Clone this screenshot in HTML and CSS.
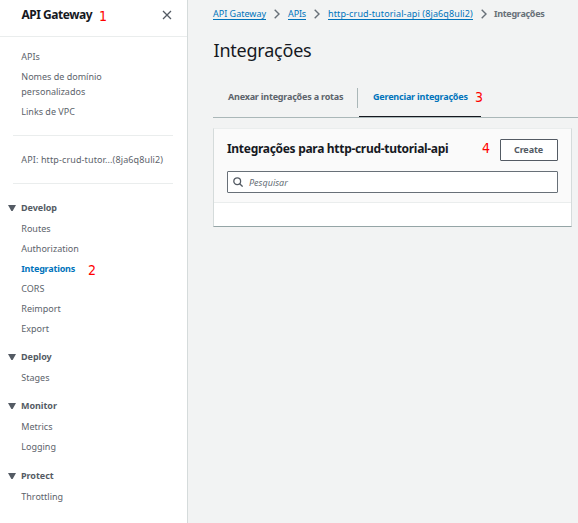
FILE: index.html
```html
<!DOCTYPE html>
<html lang="pt-BR">
<head>
<meta charset="utf-8">
<title>API Gateway</title>
<link rel="stylesheet" href="styles.css">
</head>
<body>
<div class="app">
  <aside class="sidebar">
    <header class="side-head">
      <span class="brand">API Gateway</span>
      <span class="mark mark-1">1</span>
      <svg class="close" width="10" height="10" viewBox="0 0 10 10"><path d="M1 1L9 9M9 1L1 9"/></svg>
    </header>
    <ul class="links top-links">
      <li>APIs</li>
      <li>Nomes de domínio<br>personalizados</li>
      <li>Links de VPC</li>
    </ul>
    <div class="current-api">API: http-crud-tutor...(8ja6q8uli2)</div>
    <nav>
      <section class="group">
        <h2><svg class="caret" width="8" height="6" viewBox="0 0 8 6"><path d="M0 0H8L4.6 6H3.4Z"/></svg><span>Develop</span></h2>
        <ul class="links">
          <li>Routes</li>
          <li>Authorization</li>
          <li class="active"><span class="t-int">Integrations</span><span class="mark mark-2">2</span></li>
          <li>CORS</li>
          <li>Reimport</li>
          <li>Export</li>
        </ul>
      </section>
      <section class="group">
        <h2><svg class="caret" width="8" height="6" viewBox="0 0 8 6"><path d="M0 0H8L4.6 6H3.4Z"/></svg><span>Deploy</span></h2>
        <ul class="links"><li>Stages</li></ul>
      </section>
      <section class="group">
        <h2><svg class="caret" width="8" height="6" viewBox="0 0 8 6"><path d="M0 0H8L4.6 6H3.4Z"/></svg><span>Monitor</span></h2>
        <ul class="links"><li>Metrics</li><li>Logging</li></ul>
      </section>
      <section class="group">
        <h2><svg class="caret" width="8" height="6" viewBox="0 0 8 6"><path d="M0 0H8L4.6 6H3.4Z"/></svg><span>Protect</span></h2>
        <ul class="links"><li>Throttling</li></ul>
      </section>
    </nav>
  </aside>
  <main>
    <div class="crumbs">
      <a>API Gateway</a>
      <svg class="chev" width="6" height="10" viewBox="0 0 6 10"><path d="M.7 .7L5 5L.7 9.3"/></svg>
      <a class="c2">APIs</a>
      <svg class="chev" width="6" height="10" viewBox="0 0 6 10"><path d="M.7 .7L5 5L.7 9.3"/></svg>
      <a class="c3">http-crud-tutorial-api (8ja6q8uli2)</a>
      <svg class="chev chev-last" width="6" height="10" viewBox="0 0 6 10"><path d="M.7 .7L5 5L.7 9.3"/></svg>
      <b>Integrações</b>
    </div>
    <h1>Integrações</h1>
    <div class="tabs">
      <div class="tab first">Anexar integrações a rotas</div>
      <div class="tab selected"><span class="t-manage">Gerenciar integrações</span><span class="mark mark-3">3</span></div>
    </div>
    <div class="card">
      <div class="card-head">
        <div class="title-row">
          <h3>Integrações para http-crud-tutorial-api</h3>
          <span class="mark mark-4">4</span>
          <button type="button">Create</button>
        </div>
        <div class="search">
          <svg width="10" height="10" viewBox="0 0 10 10"><circle cx="4.2" cy="4.2" r="3.4"/><path d="M6.7 6.7L9.6 9.6"/></svg>
          <span>Pesquisar</span>
        </div>
      </div>
      <div class="card-body"></div>
    </div>
  </main>
</div>
</body>
</html>
```
FILE: styles.css
```css
* { box-sizing: border-box; margin: 0; padding: 0; }
body {
  width: 578px; height: 523px; overflow: hidden;
  background: #f2f3f3; color: #5c636b;
  font: 9px/15px "Noto Sans", "Open Sans", sans-serif;
}
ul { list-style: none; }
svg { display: block; flex: none; }
.app { display: flex; height: 523px; white-space: nowrap; }
.sidebar { width: 188px; flex: none; background: #fff; border-right: 1px solid #d5dbdb; }
.side-head { display: flex; height: 37px; border-bottom: 1px solid #eaeded; padding: 6px 0 0 21.5px; line-height: 18px; }
.brand { width: 77.5px; font-size: 12px; font-weight: 700; letter-spacing: -.48px; color: #16191f; }
.close { margin: 4px 0 0 49px; }
.close path { fill: none; stroke: #545b64; stroke-width: 1.3; }
.mark { color: #f00; font: 400 14px/18px "DejaVu Sans Condensed", "DejaVu Sans", sans-serif; font-stretch: condensed; letter-spacing: 0; }
.mark-1 { width: 14px; line-height: 20px; }
.mark-2 { line-height: 18px; }
.links { display: flex; flex-direction: column; gap: 5px; padding-left: 21.3px; }
.top-links { padding-top: 12px; }
.current-api { margin: 16px 14px 0 13px; height: 49px; padding: 16px 0 0 8.3px; border: solid #eaeded; border-width: 1px 0; letter-spacing: .12px; }
nav { padding-top: 16px; }
.group { padding-bottom: 13px; }
.group:nth-child(3) { padding-bottom: 14px; }
.group h2 { display: flex; align-items: center; gap: 5px; padding-left: 8px; margin-bottom: 6px; font-size: 9px; line-height: 15px; color: #545b64; letter-spacing: -.04px; }
.caret path { fill: #545b64; }
.active { display: flex; color: #0073bb; font-weight: 700; height: 15px; letter-spacing: -.2px; }
.t-int { width: 66.7px; }
main { flex: 1; padding: 6px 0 0 25px; }
.crumbs { display: flex; height: 16px; align-items: flex-start; }
.crumbs a { color: #0073bb; height: 14px; border-bottom: 1px solid #0073bb; }
.crumbs .c2 { letter-spacing: -.15px; }
.crumbs .c3 { letter-spacing: .12px; }
.chev { margin: 3px 8px 0; }
.chev-last { margin-right: 7px; }
.chev path { fill: none; stroke: #687078; stroke-width: 1.4; }
.crumbs b { color: #687078; letter-spacing: -.28px; }
h1 { margin-top: 14px; height: 28px; padding-left: .5px; font-size: 18px; line-height: 28px; font-weight: 400; letter-spacing: -.22px; color: #16191f; }
.tabs { display: flex; height: 54px; border-bottom: 1px solid #aab7b8; padding-top: 24px; font-weight: 700; letter-spacing: -.2px; }
.tab { height: 29px; line-height: 18px; }
.tab.first { width: 145px; height: 20px; padding-left: 15px; border-right: 1px solid #aab7b8; }
.tab.selected { display: flex; width: 122px; margin-left: 1px; padding-left: 14px; border-bottom: 1px solid #16191f; color: #0073bb; }
.t-manage { flex: none; width: 102px; }
.mark-3 { line-height: 19px; }
.card { width: 359px; height: 99px; margin-top: 10px; background: #fff; border: 1px solid #d5dbdb; border-top-color: #eaeded; border-bottom-color: #95a5a6; }
.card-head { height: 74px; padding: 10px 13px 0; background: #fafafa; border-bottom: 1px solid #eaeded; }
.title-row { display: flex; height: 22px; }
h3 { width: 255px; font-size: 12px; line-height: 20px; letter-spacing: -.3px; color: #16191f; }
.mark-4 { width: 18px; line-height: 19px; }
button { width: 58px; height: 22px; padding-right: 1px; border: 1px solid #545b64; border-radius: 1px; background: #fff; color: #545b64; font: 700 9px/18px "Noto Sans", sans-serif; letter-spacing: -.1px; }
.search { display: flex; align-items: center; gap: 6px; height: 22px; margin-top: 10px; padding-left: 5px; border: 1px solid #687078; border-radius: 1px; background: #fff; color: #687078; font-style: italic; }
.search svg { fill: none; stroke: #545b64; stroke-width: 1.3; }
```
